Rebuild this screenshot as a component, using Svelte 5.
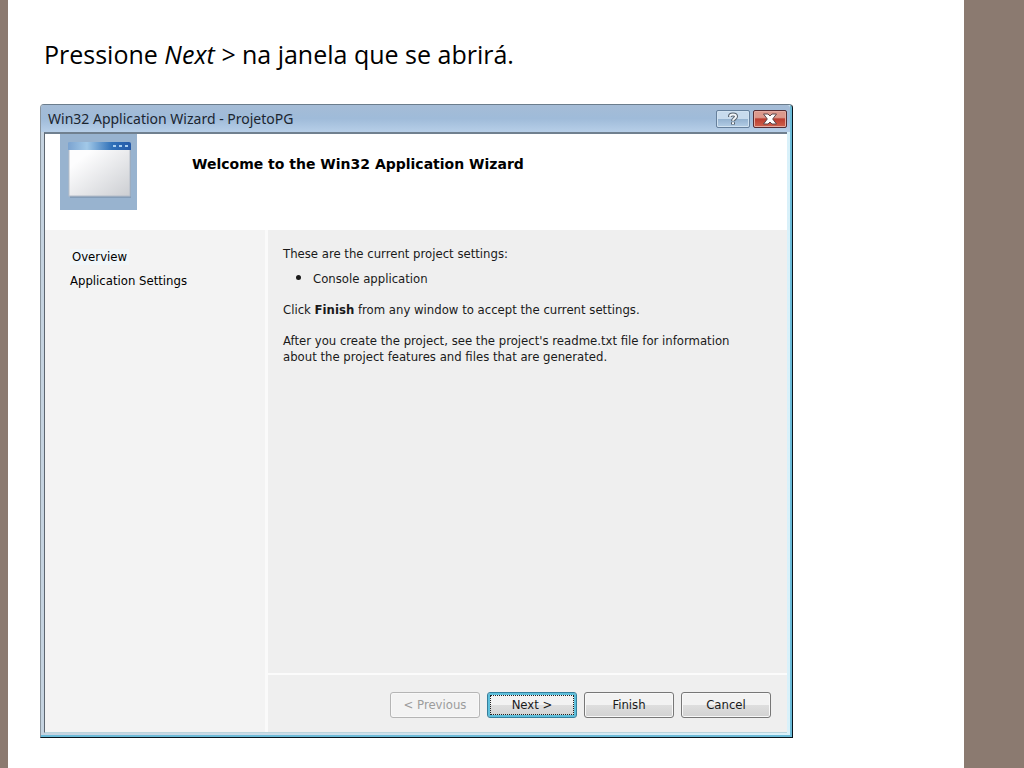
<script>
    const steps = ['Overview', 'Application Settings'];
    const settings = ['Console application'];

    const buttons = [
        { label: '< Previous', disabled: true },
        { label: 'Next >', active: true },
        { label: 'Finish' },
        { label: 'Cancel' }
    ];

    let current = $state(0);
</script>

<div class="slide">
    <main>
        <p class="instruction">Pressione <em>Next &gt;</em> na janela que se abrirá.</p>

        <section class="window" aria-label="Win32 Application Wizard">
            <header class="titlebar">
                <span class="title">Win32 Application Wizard - ProjetoPG</span>
                <button class="caption" aria-label="Help">
                    <svg width="14" height="14" viewBox="0 0 14 14">
                        <path d="M4 5V4.500C4 1.700 10 1.700 10 4.500C10 6.500 7 6.500 7 9.200M7 10.200V12.500" fill="none" stroke="#56616c" stroke-width="4" />
                        <path d="M4 4.800V4.500C4 1.700 10 1.700 10 4.500C10 6.500 7 6.500 7 8.800M7 10.200V12" fill="none" stroke="#f4f7fa" stroke-width="2" />
                    </svg>
                </button>
                <button class="caption close" aria-label="Close">
                    <svg width="16" height="12" viewBox="0 0 16 12">
                        <path d="M1.500 1H6L8 3L10 1H14.500L10.700 6L14.500 11H10L8 9L6 11H1.500L5.300 6Z" fill="#fff" stroke="#5a4549" />
                    </svg>
                </button>
            </header>

            <div class="client">
                <div class="banner">
                    <svg class="logo" width="77" height="76" viewBox="0 0 77 76">
                        <defs>
                            <linearGradient id="bar">
                                <stop offset="0" stop-color="#7ba3d0" />
                                <stop offset="0.3" stop-color="#a2c9e8" />
                                <stop offset="0.7" stop-color="#2f70b8" />
                                <stop offset="1" stop-color="#2459a8" />
                            </linearGradient>
                            <linearGradient id="pane" x1="0" y1="0" x2="1" y2="1">
                                <stop offset="0.2" stop-color="#fdfdfe" />
                                <stop offset="1" stop-color="#ccced2" />
                            </linearGradient>
                        </defs>
                        <rect width="77" height="76" fill="#98b3cf" />
                        <rect x="10" y="10" width="61" height="54" fill="#849db8" />
                        <rect x="9" y="15" width="61" height="47" fill="url(#pane)" stroke="#b5bdc8" />
                        <path d="M8 9Q8 8 10 8H69Q71 8 71 10V16H8Z" fill="url(#bar)" />
                        <path d="M53 12H56M59 12H62M65 12H68" stroke="#a9cff0" stroke-width="2" />
                    </svg>
                    <h1>Welcome to the Win32 Application Wizard</h1>
                </div>

                <div class="body">
                    <nav>
                        {#each steps as step, i}
                            <a href="#step" class:current={i === current} onclick={() => (current = i)}>{step}</a>
                        {/each}
                    </nav>

                    <div class="page">
                        <div class="text">
                            <p>These are the current project settings:</p>
                            <ul>
                                {#each settings as setting}
                                    <li>{setting}</li>
                                {/each}
                            </ul>
                            <p>Click <b>Finish</b> from any window to accept the current settings.</p>
                            <p>After you create the project, see the project's readme.txt file for information about the project features and files that are generated.</p>
                        </div>

                        <footer>
                            {#each buttons as button}
                                <button class="push" class:active={button.active} disabled={button.disabled}>
                                    <span>{button.label}</span>
                                </button>
                            {/each}
                        </footer>
                    </div>
                </div>
            </div>
        </section>
    </main>
</div>

<style>
    :global(body) {
        margin: 0;
    }

    .slide {
        box-sizing: border-box;
        display: flex;
        min-height: 100vh;
        border-left: 8px solid #8b7a70;
        border-right: 60px solid #8b7a70;
        background: #fff;
        color: #000;
    }

    main {
        display: flex;
        flex: 1;
        flex-direction: column;
        padding: 36px 171px 30px 32px;
    }

    p {
        margin: 0;
    }

    .instruction {
        margin: 0 0 32px 4px;
        font: 25px/36px "Open Sans", "Noto Sans", sans-serif;
        white-space: nowrap;
    }

    .window {
        display: flex;
        flex: 1;
        flex-direction: column;
        padding: 0 5px 4px 3px;
        border: 1px solid #07141c;
        border-top-color: #6b7d8c;
        border-left-color: #8a959e;
        border-radius: 4px 4px 0 0;
        background: linear-gradient(90deg, #c5d3e0, #d9f1fa);
        box-shadow: inset -2px -2px 0 #6bbbd8;
        font: 13px/16px "DejaVu Sans Condensed", "Noto Sans", sans-serif;
    }

    .titlebar {
        display: flex;
        align-items: center;
        gap: 3px;
        height: 27px;
        margin: 0 -3px;
        padding: 0 3px 0 7px;
        border-radius: 3px 3px 0 0;
        background: linear-gradient(#a5bcd6, #9fbbd9 50%, #b7cfe8);
    }

    .title {
        flex: 1;
        font-family: "Noto Sans", sans-serif;
        font-size: 14px;
        color: #1b2530;
    }

    button {
        display: flex;
        align-items: center;
        justify-content: center;
        box-sizing: border-box;
        font: inherit;
    }

    .caption {
        width: 34px;
        height: 18px;
        padding: 0;
        border: 1px solid #66809c;
        border-radius: 2px;
        background: linear-gradient(#c8dbed 50%, #94b2d0 50%, #b3cde5);
        box-shadow: inset 0 0 0 1px #d1e2f1;
    }

    .close {
        border-color: #542c34;
        background: linear-gradient(#dc988c 40%, #bb3d30 50%, #d0624d);
        box-shadow: inset 0 0 0 1px #e4aaa0;
    }

    .client {
        display: flex;
        flex: 1;
        flex-direction: column;
        border-top: 2px solid #70808f;
        border-left: 1px solid #5d6670;
        border-bottom: 1px solid #b9d4dc;
        background: #efefef;
    }

    .banner {
        display: flex;
        align-items: flex-start;
        gap: 55px;
        height: 96px;
        padding-left: 15px;
        background: #fff;
    }

    h1 {
        margin: 20px 0 0;
        font: bold 14px/20px "DejaVu Sans", sans-serif;
    }

    .body {
        display: flex;
        flex: 1;
    }

    nav {
        display: flex;
        flex-direction: column;
        align-items: flex-start;
        gap: 8px;
        box-sizing: border-box;
        width: 223px;
        padding: 19px 0 0 25px;
        border-right: 3px solid #fafafa;
        background: #f3f3f3;
    }

    nav a {
        color: #000;
        text-decoration: none;
    }

    nav .current {
        padding: 0 2px;
        background: #f1f6f9;
    }

    .page {
        display: flex;
        flex: 1;
        flex-direction: column;
    }

    .text {
        display: flex;
        flex: 1;
        flex-direction: column;
        gap: 15px;
        padding: 16px 32px 0 15px;
        color: #1a1a1a;
    }

    ul {
        margin: -7px 0 0;
        padding-left: 30px;
    }

    li::marker {
        font-size: 16px;
    }

    footer {
        display: flex;
        justify-content: flex-end;
        gap: 7px;
        padding: 17px 16px 14px;
        border-top: 2px solid #fbfbfb;
    }

    .push {
        width: 90px;
        height: 26px;
        padding: 2px;
        border: 1px solid #777;
        border-radius: 3px;
        background: linear-gradient(#f2f2f2 50%, #dedede 50%, #d2d2d2);
        box-shadow: inset 0 0 0 1px #f8f8f8;
        color: #1a1a1a;
    }

    .push:disabled {
        border-color: #b5b5b5;
        background: #f3f3f3;
        color: #9c9c9c;
    }

    .push span {
        flex: 1;
        line-height: 18px;
        border: 1px solid transparent;
    }

    .push.active {
        border-color: #367e9c;
        box-shadow: inset 0 0 0 2px #5fc0dc;
    }

    .push.active span {
        border: 1px dotted #222;
    }
</style>
